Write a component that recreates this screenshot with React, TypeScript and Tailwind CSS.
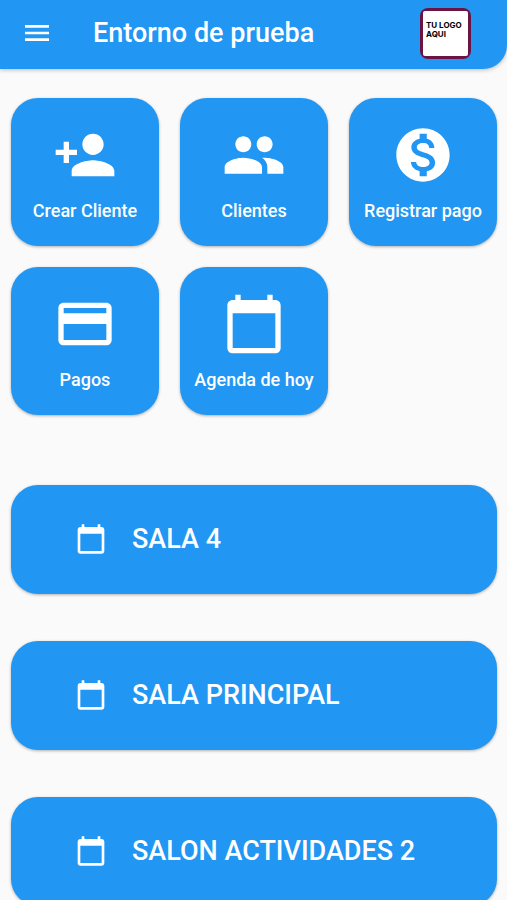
import type { IconType } from "react-icons";
import {
	MdCalendarToday,
	MdCreditCard,
	MdMenu,
	MdMonetizationOn,
	MdPeople,
	MdPersonAdd,
} from "react-icons/md";

const actions: { label: string; icon: IconType }[] = [
	{ label: "Crear Cliente", icon: MdPersonAdd },
	{ label: "Clientes", icon: MdPeople },
	{ label: "Registrar pago", icon: MdMonetizationOn },
	{ label: "Pagos", icon: MdCreditCard },
	{ label: "Agenda de hoy", icon: MdCalendarToday },
];

const rooms = ["SALA 4", "SALA PRINCIPAL", "SALON ACTIVIDADES 2"];

export default function App() {
	return (
		<div className="min-h-screen bg-[#fafafa] font-['Roboto',sans-serif] font-medium text-white">
			<header className="flex h-[69px] items-center rounded-br-3xl bg-[#2196f3] pl-[21px] pr-9 pb-[3px] shadow-[0_1px_4px_rgba(0,0,0,0.25)]">
				<button aria-label="Menú">
					<MdMenu className="size-8" />
				</button>
				<h1 className="ml-10 text-[27px] leading-8">Entorno de prueba</h1>
				{/* Logo */}
				<div className="ml-auto size-[51px] rounded-lg bg-[#6b1443] px-[3px] py-[3px] font-['Inter',sans-serif] text-[8px] leading-[9px] font-bold text-black">
					<div className="h-full rounded-xs bg-white pt-2.5 pl-[3px] whitespace-nowrap">
						TU LOGO
						<br />
						AQUI
					</div>
				</div>
			</header>
			<main className="pt-[29px] pr-2.5 pb-12 pl-[11px]">
				<div className="grid grid-cols-3 gap-[21px]">
					{actions.map(({ label, icon: Icon }) => (
						<button
							key={label}
							className="flex aspect-square flex-col items-center rounded-[27px] bg-[#2196f3] pt-[25px] shadow-[0_1px_3px_rgba(0,0,0,0.3)]"
						>
							<Icon className="size-16" />
							<span className="mt-3 text-[18px] leading-6 whitespace-nowrap">{label}</span>
						</button>
					))}
				</div>
				{/* Rooms */}
				<div className="mt-[70px] flex flex-col gap-[47px]">
					{rooms.map((room) => (
						<button
							key={room}
							className="flex h-[109px] items-center gap-[25px] rounded-[27px] bg-[#2196f3] pb-0.5 pl-16 text-left shadow-[0_1px_3px_rgba(0,0,0,0.3)]"
						>
							<MdCalendarToday className="size-8" />
							<span className="text-[27px] leading-8">{room}</span>
						</button>
					))}
				</div>
			</main>
		</div>
	);
}
